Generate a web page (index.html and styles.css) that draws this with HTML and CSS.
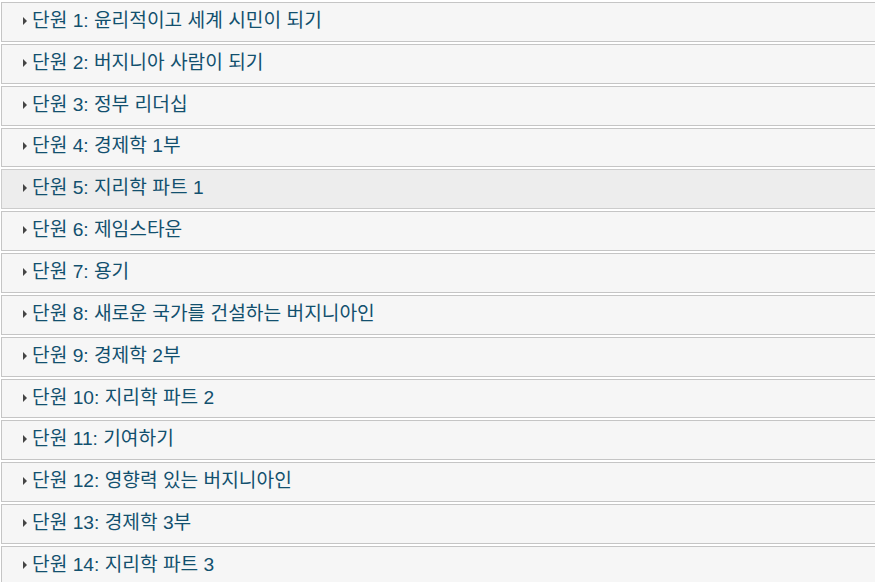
FILE: index.html
```html
<!DOCTYPE html>
<html lang="ko">
<head>
<meta charset="utf-8">
<title>단원</title>
<link rel="stylesheet" href="styles.css">
</head>
<body>
<div class="accordion">
  <div class="item"><span class="tri"></span><span class="label">단원 1: 윤리적이고 세계 시민이 되기</span></div>
  <div class="item"><span class="tri"></span><span class="label">단원 2: 버지니아 사람이 되기</span></div>
  <div class="item"><span class="tri"></span><span class="label">단원 3: 정부 리더십</span></div>
  <div class="item"><span class="tri"></span><span class="label">단원 4: 경제학 1부</span></div>
  <div class="item hover"><span class="tri"></span><span class="label">단원 5: 지리학 파트 1</span></div>
  <div class="item"><span class="tri"></span><span class="label">단원 6: 제임스타운</span></div>
  <div class="item"><span class="tri"></span><span class="label">단원 7: 용기</span></div>
  <div class="item"><span class="tri"></span><span class="label">단원 8: 새로운 국가를 건설하는 버지니아인</span></div>
  <div class="item"><span class="tri"></span><span class="label">단원 9: 경제학 2부</span></div>
  <div class="item"><span class="tri"></span><span class="label">단원 10: 지리학 파트 2</span></div>
  <div class="item"><span class="tri"></span><span class="label">단원 11: 기여하기</span></div>
  <div class="item"><span class="tri"></span><span class="label">단원 12: 영향력 있는 버지니아인</span></div>
  <div class="item"><span class="tri"></span><span class="label">단원 13: 경제학 3부</span></div>
  <div class="item"><span class="tri"></span><span class="label">단원 14: 지리학 파트 3</span></div>
</div>
</body>
</html>
```
FILE: styles.css
```css
html, body {
  margin: 0;
  padding: 0;
  overflow: hidden;
  background: #ffffff;
}
.accordion {
  margin-left: 1px;
  width: 884px;
  font-family: "Liberation Sans", "Noto Sans CJK KR", sans-serif;
  font-size: 19.2px;
}
.item {
  box-sizing: border-box;
  height: 39.85px;
  margin-top: 2px;
  border: 1px solid #c5c5c5;
  background: #f6f6f6;
  display: flex;
  align-items: center;
  padding-left: 21px;
  padding-bottom: 2px;
  color: #12506e;
}
.item.hover {
  border-color: #cccccc;
  background: #ededed;
}
.tri {
  width: 0;
  height: 0;
  border-top: 4px solid transparent;
  border-bottom: 4px solid transparent;
  border-left: 4px solid #454545;
  margin-right: 5px;
  flex: none;
}
.label {
  line-height: 22px;
  white-space: nowrap;
}
```
